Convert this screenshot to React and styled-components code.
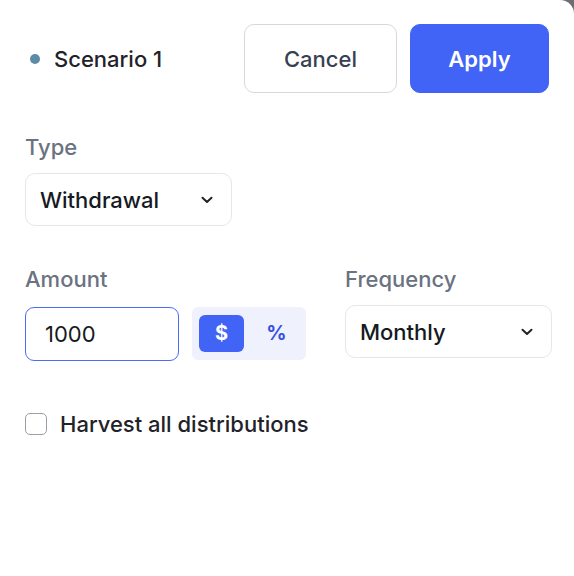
import React, { useState } from 'react';
import styled, { createGlobalStyle } from 'styled-components';

const GlobalStyle = createGlobalStyle`
    html, body {
        margin: 0;
        padding: 0;
        background: #6b6e73;
    }
    body {
        font-family: Inter, "Noto Sans", "Liberation Sans", sans-serif;
        -webkit-font-smoothing: antialiased;
    }
`;

const Panel = styled.div`
    width: 574px;
    height: 576px;
    box-sizing: border-box;
    background: #fff;
    border-top-right-radius: 14px;
    padding: 24px 25px 0 25px;
    display: flex;
    flex-direction: column;
`;

const Header = styled.div`
    display: flex;
    align-items: center;
    height: 69px;
`;

const Title = styled.div`
    flex: 1;
    display: flex;
    align-items: center;
    gap: 14px;
    padding-left: 5px;
    font-size: 22px;
    font-weight: 500;
    color: #1f2329;
`;

const Dot = styled.span`
    width: 10px;
    height: 10px;
    border-radius: 50%;
    background: #5b8ba6;
`;

const Button = styled.button`
    height: 69px;
    width: ${(p) => p.$width}px;
    box-sizing: border-box;
    border-radius: 10px;
    font-family: inherit;
    font-size: 22px;
    font-weight: ${(p) => (p.$primary ? 600 : 500)};
    cursor: pointer;
    border: 1px solid ${(p) => (p.$primary ? '#4264f6' : '#d6d8dc')};
    background: ${(p) => (p.$primary ? '#4264f6' : '#fff')};
    color: ${(p) => (p.$primary ? '#fff' : '#374151')};
    margin-left: ${(p) => p.$gap || 0}px;
`;

const Section = styled.div`
    display: flex;
    flex-direction: column;
    gap: 14px;
    margin-top: ${(p) => p.$top}px;
`;

const Row = styled.div`
    display: flex;
    gap: 39px;
    margin-top: ${(p) => p.$top}px;
`;

const Label = styled.div`
    font-size: 22px;
    line-height: 24px;
    font-weight: 500;
    color: #6b7280;
`;

const SelectBox = styled.div`
    width: ${(p) => p.$width}px;
    height: 53px;
    box-sizing: border-box;
    border: 1.5px solid #e6e7ea;
    border-radius: 10px;
    display: flex;
    align-items: center;
    justify-content: space-between;
    padding: 0 18px 0 14px;
    font-size: 22px;
    font-weight: 500;
    color: #151a22;
`;

const Chevron = () => (
    <svg width="12" height="8" viewBox="0 0 12 8" fill="none">
        <path d="M1.5 1.8 L6 6 L10.5 1.8" stroke="#1f2329" strokeWidth="2" strokeLinecap="round" strokeLinejoin="round" />
    </svg>
);

const AmountFields = styled.div`
    display: flex;
    gap: 13px;
    align-items: center;
`;

const AmountInput = styled.input`
    width: 154px;
    height: 54px;
    box-sizing: border-box;
    border: 1.5px solid #4a6cf7;
    border-radius: 9px;
    padding: 0 19px;
    font-family: inherit;
    font-size: 22px;
    color: #151a22;
    outline: none;
    margin-top: 2px;
`;

const Toggle = styled.div`
    width: 114px;
    height: 53px;
    box-sizing: border-box;
    background: #eff2fd;
    border-radius: 6px;
    padding: 8px 7px;
    display: flex;
    gap: 10px;
`;

const ToggleButton = styled.button`
    flex: 1;
    border: none;
    border-radius: 6px;
    font-family: inherit;
    font-size: 20px;
    font-weight: 700;
    cursor: pointer;
    background: ${(p) => (p.$active ? '#4264f6' : 'transparent')};
    color: ${(p) => (p.$active ? '#fff' : '#3650e0')};
`;

const CheckRow = styled.label`
    display: flex;
    align-items: center;
    gap: 13px;
    margin-top: 50px;
    font-size: 22px;
    font-weight: 500;
    color: #1f2329;
    cursor: pointer;
`;

const Box = styled.span`
    width: 22px;
    height: 22px;
    box-sizing: border-box;
    border: 1.5px solid #9ca0a8;
    border-radius: 5px;
    background: ${(p) => (p.$checked ? '#4264f6' : '#fff')};
`;

export default function App() {
    const [unit, setUnit] = useState('$');
    const [amount, setAmount] = useState('1000');
    const [harvest, setHarvest] = useState(false);

    return (
        <>
            <GlobalStyle />
            <Panel>
                <Header>
                    <Title>
                        <Dot />
                        Scenario 1
                    </Title>
                    <Button $width={153}>Cancel</Button>
                    <Button $width={139} $gap={13} $primary>Apply</Button>
                </Header>

                <Section $top={42}>
                    <Label>Type</Label>
                    <SelectBox $width={207}>
                        Withdrawal
                        <Chevron />
                    </SelectBox>
                </Section>

                <Row $top={41}>
                    <Section $top={0}>
                        <Label>Amount</Label>
                        <AmountFields>
                            <AmountInput value={amount} onChange={(e) => setAmount(e.target.value)} />
                            <Toggle>
                                <ToggleButton $active={unit === '$'} onClick={() => setUnit('$')}>$</ToggleButton>
                                <ToggleButton $active={unit === '%'} onClick={() => setUnit('%')}>%</ToggleButton>
                            </Toggle>
                        </AmountFields>
                    </Section>
                    <Section $top={0}>
                        <Label>Frequency</Label>
                        <SelectBox $width={207}>
                            Monthly
                            <Chevron />
                        </SelectBox>
                    </Section>
                </Row>

                <CheckRow onClick={() => setHarvest(!harvest)}>
                    <Box $checked={harvest} />
                    Harvest all distributions
                </CheckRow>
            </Panel>
        </>
    );
}
